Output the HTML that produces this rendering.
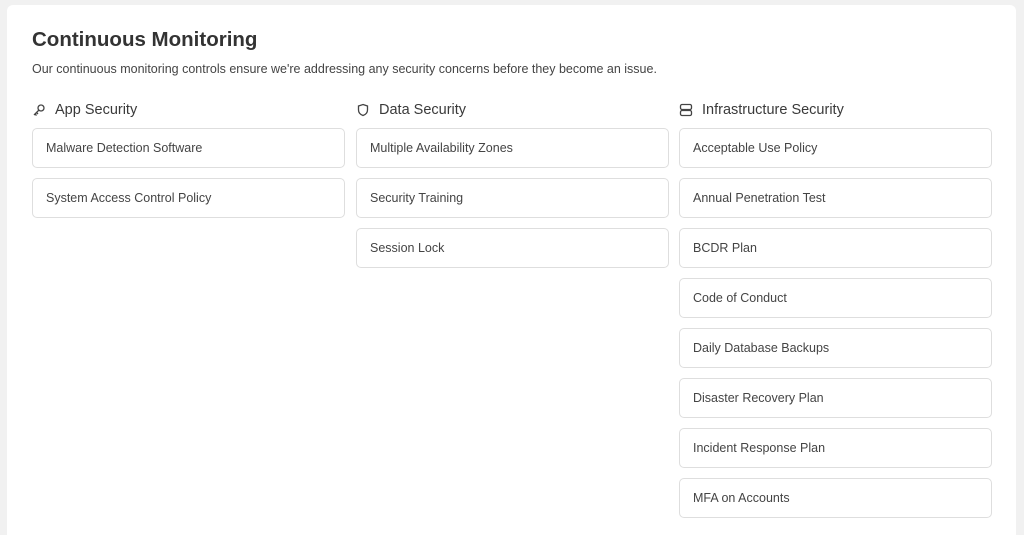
<!DOCTYPE html>
<html><head><style>
html,body{margin:0;height:535px;overflow:hidden}
body{background:#f1f1f1;font-family:"Liberation Sans",sans-serif;width:1024px;position:relative}
.card{position:absolute;left:7px;top:5px;width:1009px;height:530px;background:#fff;border-radius:6px 6px 0 0}
h1{position:absolute;left:32px;top:28px;margin:0;font-size:20.5px;font-weight:bold;color:#333}
.sub{position:absolute;left:32px;top:62px;font-size:12.5px;color:#444}
.col{position:absolute;top:0;width:313px}
.hd{position:absolute;top:102px;left:0;font-size:14.5px;color:#3a3a3a;display:flex;align-items:center}
.hd svg{margin-right:9px}
.it{position:absolute;left:0;height:38px;border:1px solid #dedede;border-radius:5px;font-size:12.5px;color:#444;line-height:39px;padding-left:13px;width:298px}
</style></head><body>
<div class="card"></div>
<h1>Continuous Monitoring</h1>
<div class="sub">Our continuous monitoring controls ensure we're addressing any security concerns before they become an issue.</div>
<div class="col" style="left:32px">
<div class="hd"><svg width="14" height="14" viewBox="0 0 14 14" fill="none" stroke="#444" stroke-width="1.3"><circle cx="9" cy="5" r="3"/><path d="M7 7L2 12M3 11l1.5 1.5M4.5 9.5l1.5 1.5"/></svg>App Security</div>
<div class="it" style="top:128px">Malware Detection Software</div>
<div class="it" style="top:178px">System Access Control Policy</div>
</div>
<div class="col" style="left:356px">
<div class="hd"><svg width="14" height="14" viewBox="0 0 14 14" fill="none" stroke="#444" stroke-width="1.3"><path d="M7 1.5L11.5 3v4c0 3-2.5 4.8-4.5 5.5C5 11.8 2.5 10 2.5 7V3z"/></svg>Data Security</div>
<div class="it" style="top:128px">Multiple Availability Zones</div>
<div class="it" style="top:178px">Security Training</div>
<div class="it" style="top:228px">Session Lock</div>
</div>
<div class="col" style="left:679px">
<div class="hd"><svg width="14" height="14" viewBox="0 0 14 14" fill="none" stroke="#444" stroke-width="1.3"><rect x="1.5" y="1.5" width="11" height="5" rx="1.5"/><rect x="1.5" y="7.5" width="11" height="5" rx="1.5"/></svg>Infrastructure Security</div>
<div class="it" style="top:128px">Acceptable Use Policy</div>
<div class="it" style="top:178px">Annual Penetration Test</div>
<div class="it" style="top:228px">BCDR Plan</div>
<div class="it" style="top:278px">Code of Conduct</div>
<div class="it" style="top:328px">Daily Database Backups</div>
<div class="it" style="top:378px">Disaster Recovery Plan</div>
<div class="it" style="top:428px">Incident Response Plan</div>
<div class="it" style="top:478px">MFA on Accounts</div>
</div>
</body></html>
